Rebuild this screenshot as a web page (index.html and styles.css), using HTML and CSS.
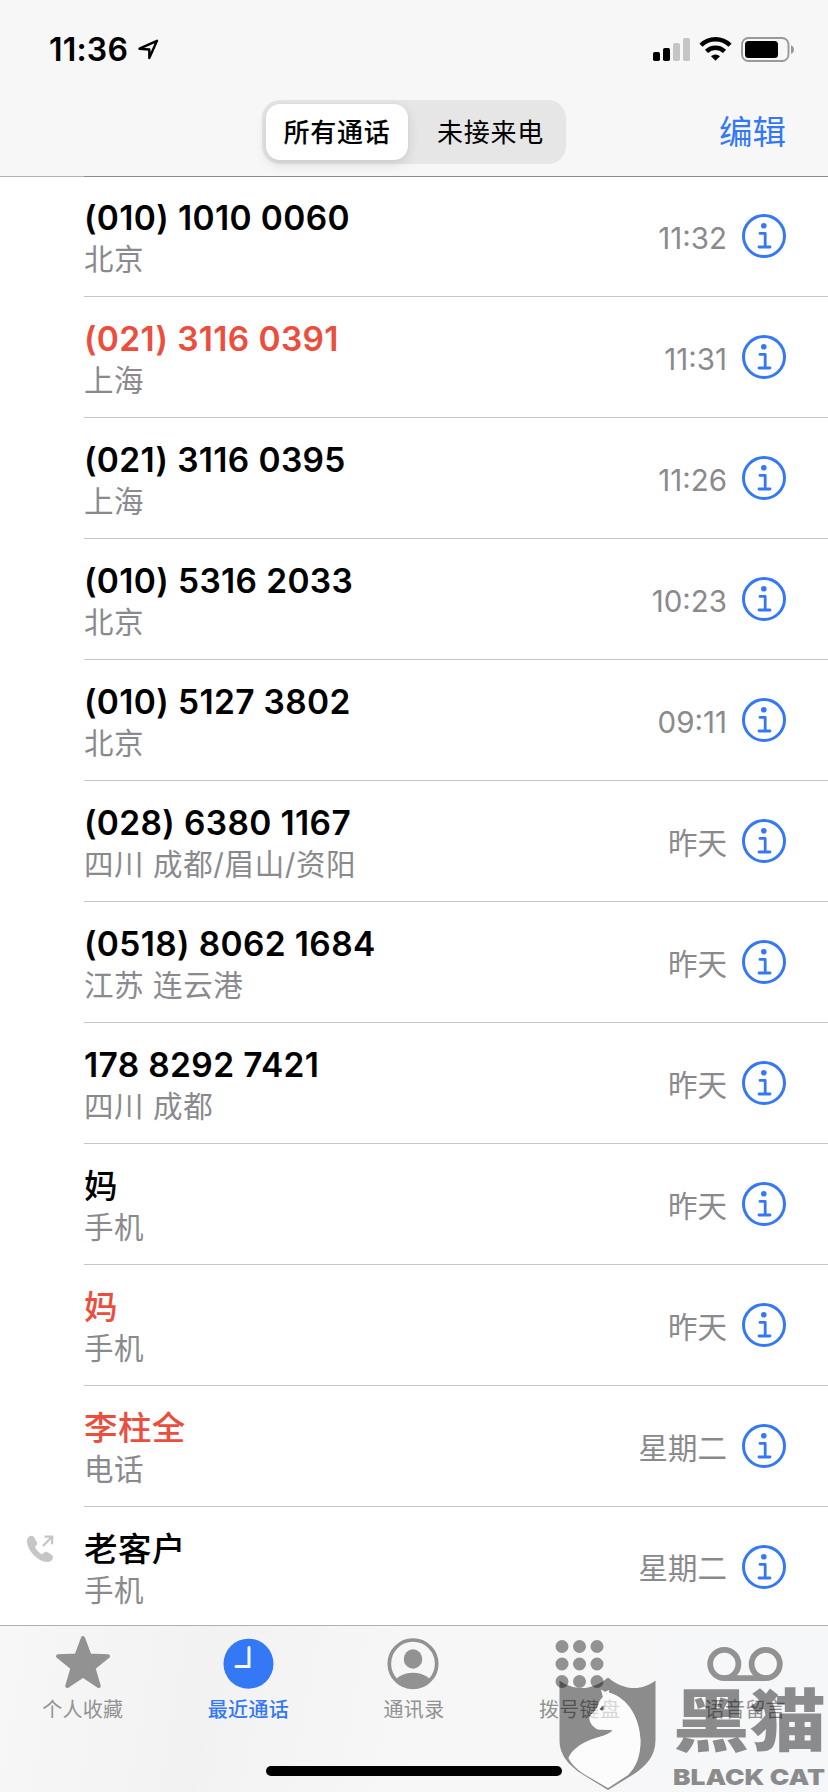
FILE: index.html
```html
<!DOCTYPE html>
<html lang="zh-CN">
<head>
<meta charset="utf-8">
<title>最近通话</title>
<link rel="stylesheet" href="styles.css">
</head>
<body>
<svg class="defs" width="0" height="0" aria-hidden="true">
  <symbol id="info" viewBox="0 0 44 44">
    <circle cx="22" cy="22" r="20.5" fill="none" stroke="currentColor" stroke-width="3"/>
    <circle cx="21.8" cy="11.7" r="2.8" fill="currentColor"/>
    <path d="M18 19.4h5.2v13.4M17 33h11" fill="none" stroke="currentColor" stroke-width="2.8" stroke-linecap="round" stroke-linejoin="round"/>
  </symbol>
</svg>
<div class="phone">
  <header class="top">
    <div class="status">
      <span class="clock">11:36</span>
      <svg class="loc" width="22" height="22" viewBox="0 0 22 22"><path d="M2.500 9.700 20 1.800 12.300 19V10.500Z" fill="none" stroke="#000" stroke-width="2.400" stroke-linejoin="round"/></svg>
      <svg class="signals" width="144" height="28" viewBox="0 0 144 28">
        <rect x="1" y="16" width="7" height="9" rx="1.8"/><rect x="11" y="12" width="7" height="13" rx="1.8"/>
        <g fill="#c5c5c5"><rect x="21" y="7" width="7" height="18" rx="1.8"/><rect x="31" y="2" width="7" height="23" rx="1.8"/></g>
        <g fill="none" stroke="#000" stroke-width="4.4"><path d="M49 9.3a20.5 20.5 0 0 1 29 0"/><path d="M54.500 15.300a13 13 0 0 1 18 0"/></g>
        <path d="M63.500 24.800 59 20.200a7 7 0 0 1 9 0Z"/>
        <rect x="90" y="2" width="46.500" height="23" rx="6.500" fill="none" stroke="#999" stroke-width="1.900"/>
        <rect x="93" y="5" width="33" height="17" rx="3.500"/>
        <path d="M139 9.200c4 1.200 4 7.400 0 8.600Z" fill="#999"/>
      </svg>
    </div>
    <div class="nav">
      <div class="segment"><span class="seg on">所有通话</span><span class="seg">未接来电</span></div>
      <a class="edit">编辑</a>
    </div>
  </header>
  <main class="calls">
    <div class="call"><div class="body"><div class="who"><b>(010) 1010 0060</b><span>北京</span></div><time>11:32</time><svg class="info"><use href="#info"/></svg></div></div>
    <div class="call missed"><div class="body"><div class="who"><b>(021) 3116 0391</b><span>上海</span></div><time>11:31</time><svg class="info"><use href="#info"/></svg></div></div>
    <div class="call"><div class="body"><div class="who"><b>(021) 3116 0395</b><span>上海</span></div><time>11:26</time><svg class="info"><use href="#info"/></svg></div></div>
    <div class="call"><div class="body"><div class="who"><b>(010) 5316 2033</b><span>北京</span></div><time>10:23</time><svg class="info"><use href="#info"/></svg></div></div>
    <div class="call"><div class="body"><div class="who"><b>(010) 5127 3802</b><span>北京</span></div><time>09:11</time><svg class="info"><use href="#info"/></svg></div></div>
    <div class="call"><div class="body"><div class="who"><b>(028) 6380 1167</b><span>四川 成都/眉山/资阳</span></div><time>昨天</time><svg class="info"><use href="#info"/></svg></div></div>
    <div class="call"><div class="body"><div class="who"><b>(0518) 8062 1684</b><span>江苏 连云港</span></div><time>昨天</time><svg class="info"><use href="#info"/></svg></div></div>
    <div class="call"><div class="body"><div class="who"><b>178 8292 7421</b><span>四川 成都</span></div><time>昨天</time><svg class="info"><use href="#info"/></svg></div></div>
    <div class="call"><div class="body"><div class="who"><b class="han">妈</b><span>手机</span></div><time>昨天</time><svg class="info"><use href="#info"/></svg></div></div>
    <div class="call missed"><div class="body"><div class="who"><b class="han">妈</b><span>手机</span></div><time>昨天</time><svg class="info"><use href="#info"/></svg></div></div>
    <div class="call missed"><div class="body"><div class="who"><b class="han">李柱全</b><span>电话</span></div><time>星期二</time><svg class="info"><use href="#info"/></svg></div></div>
    <div class="call">
      <svg class="outgoing" width="28" height="28" viewBox="0 0 28 28"><path d="M5.500.8C3 1 1 3.300 1 6.300 1 15.500 12.500 27 21 27c3.300 0 6-2.300 6-4.600 0-1.200-.6-2-1.600-2.700l-3.800-2.500c-1.400-.9-2.500-.7-3.500.3l-1.300 1.300c-.5.5-1.100.4-1.700 0-2-1.300-4.500-3.800-5.800-5.800-.4-.6-.4-1.200.1-1.700l1-1.100c1-1 1-2.200.2-3.500L8.300 2.500C7.500 1.300 6.600.7 5.500.8Z" fill="#c6c6c8"/><path d="M17 11 25.500 2.300M18.500 1.700h7.600v7.600" fill="none" stroke="#c6c6c8" stroke-width="2.300"/></svg>
      <div class="body"><div class="who"><b class="han">老客户</b><span>手机</span></div><time>星期二</time><svg class="info"><use href="#info"/></svg></div>
    </div>
  </main>
  <footer class="tabs">
    <nav class="tabrow">
      <a class="tab"><svg viewBox="0 0 60 60"><path d="M30 6 36.500 23.500 55 24.300 40.500 36 45.800 54 30 43.500 14.200 54 19.500 36 5 24.300 23.500 23.500Z" fill="currentColor" stroke="currentColor" stroke-width="4" stroke-linejoin="round"/></svg><span>个人收藏</span></a>
      <a class="tab active"><svg viewBox="0 0 60 60"><circle cx="30.500" cy="31.700" r="25" fill="currentColor"/><path d="M31 15.500v19H18" fill="none" stroke="#f7f7f7" stroke-width="3" stroke-linecap="round"/></svg><span>最近通话</span></a>
      <a class="tab"><svg viewBox="0 0 60 60"><defs><clipPath id="face"><circle cx="29" cy="31.700" r="24"/></clipPath></defs><circle cx="29" cy="31.700" r="23.700" fill="none" stroke="currentColor" stroke-width="3.700"/><g clip-path="url(#face)"><ellipse cx="29" cy="27" rx="9.300" ry="9.700" fill="currentColor"/><ellipse cx="29" cy="54" rx="19.500" ry="13.300" fill="currentColor"/></g></svg><span>通讯录</span></a>
      <a class="tab"><svg viewBox="0 0 60 60"><g fill="currentColor"><circle cx="12" cy="14.500" r="6.500"/><circle cx="29.500" cy="14.500" r="6.500"/><circle cx="47" cy="14.500" r="6.500"/><circle cx="12" cy="32" r="6.500"/><circle cx="29.500" cy="32" r="6.500"/><circle cx="47" cy="32" r="6.500"/><circle cx="12" cy="49.500" r="6.500"/><circle cx="29.500" cy="49.500" r="6.500"/><circle cx="47" cy="49.500" r="6.500"/></g></svg><span>拨号键盘</span></a>
      <a class="tab"><svg class="wide" viewBox="0 0 80 60"><g fill="none" stroke="currentColor" stroke-width="5.800"><circle cx="19.300" cy="32" r="14.100"/><circle cx="60.700" cy="32" r="14.100"/><path d="M19.300 46.100h41.400"/></g></svg><span>语音留言</span></a>
    </nav>
    <div class="home"></div>
  </footer>
  <svg class="mark" width="272" height="116" viewBox="0 0 272 116">
    <path d="M3.500 4.500C18 15 36 15 52 1.500 68 15 86 15 99.500 4.500V64C99.500 80 90 90 78 98L52 114 26 98C14 90 3.500 80 3.500 64ZM45 13.500 47 21C43 25 42.500 28 41 32 37 37 33 40 33.500 43 34 48 38 51.500 42 53.500L56.500 54C54 59 44 60 34 64 24 68 15 75 12.500 82 15 87 20 93 28 98L52 112 72 99C80 91 84.500 80 84.500 65 84 42 72 22 53 16.500L53 14 49 16Z" fill="#000" fill-opacity=".43" fill-rule="evenodd"/>
    <path d="M45 13.500 47 21C43 25 42.500 28 41 32 37 37 33 40 33.500 43 34 48 38 51.500 42 53.500L56.500 54C54 59 44 60 34 64 24 68 15 75 12.500 82 15 87 20 93 28 98L52 112 72 99C80 91 84.500 80 84.500 65 84 42 72 22 53 16.500L53 14 49 16Z" fill="#fff" fill-opacity=".62"/>
    <path d="m43.500 33 4-3.500v4l-2 1Z" fill="#555"/>
    <g class="brand"><text class="cn" x="117" y="69.500" textLength="153" lengthAdjust="spacingAndGlyphs">黑猫</text><text class="en" x="117" y="108.500" textLength="152" lengthAdjust="spacingAndGlyphs">BLACK CAT</text></g>
  </svg>
</div>
</body>
</html>
```
FILE: styles.css
```css
* { box-sizing: border-box; }
body { margin: 0; background: #fff; font-family: Inter, "Noto Sans CJK SC", sans-serif; color: #000; }
.defs { position: absolute; }
.phone { position: relative; width: 828px; height: 1792px; overflow: hidden; display: flex; flex-direction: column; }
.top { height: 177px; flex: none; background: linear-gradient(90deg, #b2b2b2 84px, #8c8c8c 84px) bottom / 100% 1px no-repeat #f7f7f7; }
.status { height: 100px; padding: 0 32px 0 49px; display: flex; align-items: center; }
.clock { font-size: 32px; font-weight: 600; line-height: 40px; width: 88px; letter-spacing: .2px; }
.signals { margin-left: auto; }
.nav { height: 64px; display: grid; grid-template-columns: 1fr 304px 1fr; align-items: center; }
.segment { grid-column: 2; height: 64px; padding: 4px; display: flex; border-radius: 18px; background: #e6e6e7; }
.seg { width: 142px; display: flex; align-items: center; justify-content: center; font-size: 26px; letter-spacing: .7px; line-height: 58px; padding-top: 1px; }
.seg + .seg { width: 154px; padding-left: 11px; }
.seg.on { font-weight: 500; background: #fff; border-radius: 14px; box-shadow: 0 4px 12px rgba(0,0,0,.12), 0 0 2px rgba(0,0,0,.06); }
.edit { justify-self: end; padding-right: 42px; color: #3478f6; font-size: 33.5px; line-height: 50px; }
.calls { flex: none; height: 1448px; }
.call { height: 121px; display: flex; padding-left: 84px; }
.call:first-child { height: 120px; }
.call:first-child .who { padding-top: 17px; }
.body { flex: 1; display: flex; align-items: center; padding-right: 42px; border-bottom: 1px solid #c6c6c8; }
.call:first-child .info, .call:first-child time { position: relative; top: -1px; }
.call:last-child { height: 118px; }
.call:last-child .body { border: 0; }
.call:last-child .info { margin-bottom: -1px; }
.who { flex: 1; align-self: flex-start; padding-top: 18px; display: flex; flex-direction: column; }
.who b { font-weight: 600; font-size: 33.5px; line-height: 48px; height: 45px; white-space: nowrap; letter-spacing: .36px; }
.who b.han { font-weight: 500; letter-spacing: .4px; }
.who span { font-size: 29.5px; line-height: 40px; color: #8a8a8e; letter-spacing: .6px; }
.missed b { color: #eb4e3d; }
time { font-size: 29.5px; line-height: 40px; color: #8a8a8e; margin: 4px 15px 0 0; }
.info { width: 44px; height: 44px; color: #3478f6; flex: none; }
.outgoing { margin: 28px 30px 0 -58px; flex: none; }
.tabs { flex: 1; border-top: 1px solid #b0b0b2; background: linear-gradient(100deg, #f7f7f7, #f2f2f3 25%, #f7f7f7 50%, #f6f7f9); display: flex; flex-direction: column; align-items: center; }
.tabrow { width: 100%; height: 140px; display: grid; grid-template-columns: repeat(5, 1fr); padding-top: 6px; }
.tab { display: flex; flex-direction: column; align-items: center; color: #929292; font-size: 20px; line-height: 28px; }
.tab svg { width: 60px; height: 60px; flex: none; }
.tab svg.wide { width: 80px; }
.tab span { margin-top: 4px; letter-spacing: .3px; }
.tab.active { color: #3478f6; font-weight: 500; }
.home { width: 296px; height: 10px; border-radius: 5px; background: #000; }
.mark { position: absolute; left: 556px; top: 1676px; }
.brand { opacity: .43; }
.cn { font: 900 68px "Noto Sans CJK SC", sans-serif; }
.en { font: 900 22px Inter, sans-serif; }
```
